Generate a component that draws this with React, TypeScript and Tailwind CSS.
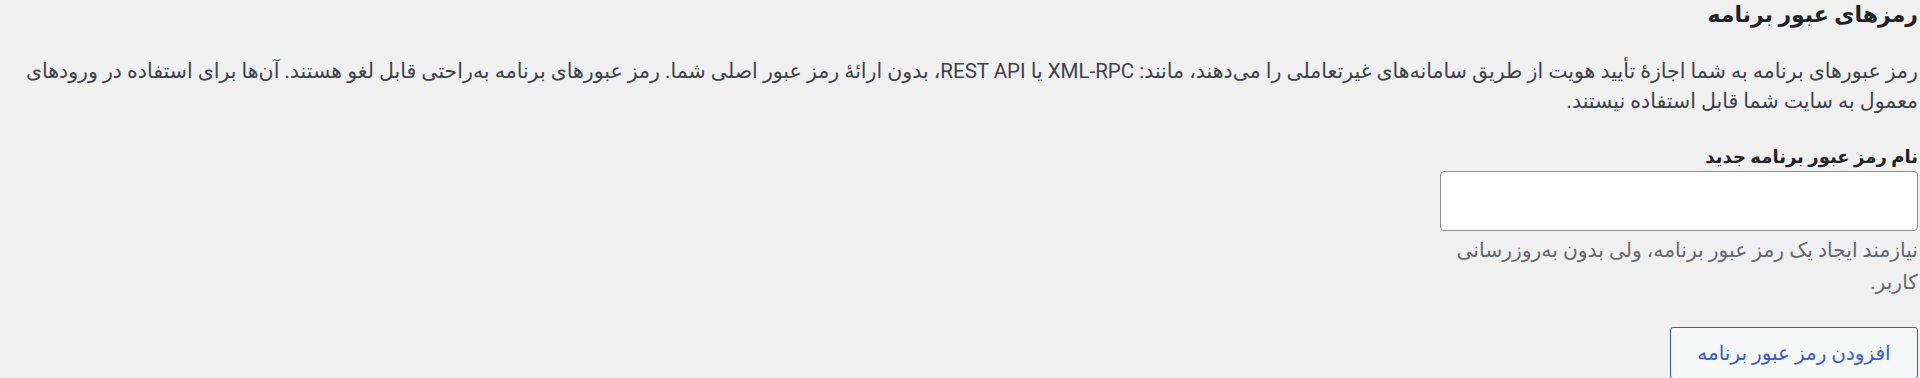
export default function App() {
  return (
    <div
      dir="rtl"
      className="min-h-[378px] bg-[#f0f0f1] pr-[2px] pl-5 text-[#3c434a]"
      style={{ fontFamily: 'Roboto, "DejaVu Sans", sans-serif' }}
    >
      <h2 className="text-[22px] font-bold leading-[30px] text-[#1d2327]">رمزهای عبور برنامه</h2>

      <p className="mt-[26px] text-[20.5px] leading-[30px]">
        رمز عبورهای برنامه به شما اجازهٔ تأیید هویت از طریق سامانه‌های غیرتعاملی را می‌دهند، مانند: XML-RPC یا REST API، بدون ارائهٔ رمز عبور اصلی شما. رمز عبورهای برنامه به‌راحتی قابل لغو هستند. آن‌ها برای استفاده در ورودهای معمول به سایت شما قابل استفاده نیستند.
      </p>

      <div className="mt-[26px] flex w-[478px] flex-col">
        <label htmlFor="new_application_password_name" className="text-[18px] font-bold leading-[29px] text-[#1d2327]">
          نام رمز عبور برنامه جدید
        </label>
        <input
          id="new_application_password_name"
          type="text"
          className="h-[60px] w-full rounded-[4px] border border-[#8c8f94] bg-white px-2"
        />
        <p className="mt-[3px] text-[20.3px] leading-[32px] text-[#646970]">
          نیازمند ایجاد یک رمز عبور برنامه، ولی بدون به‌روزرسانی کاربر.
        </p>
      </div>

      <button
        type="button"
        className="mt-[29px] h-[52px] w-[248px] rounded-[3px] border border-[#3858e9] bg-[#f6f7f7] text-[20px] text-[#3858e9]"
      >
        افزودن رمز عبور برنامه
      </button>
    </div>
  )
}
